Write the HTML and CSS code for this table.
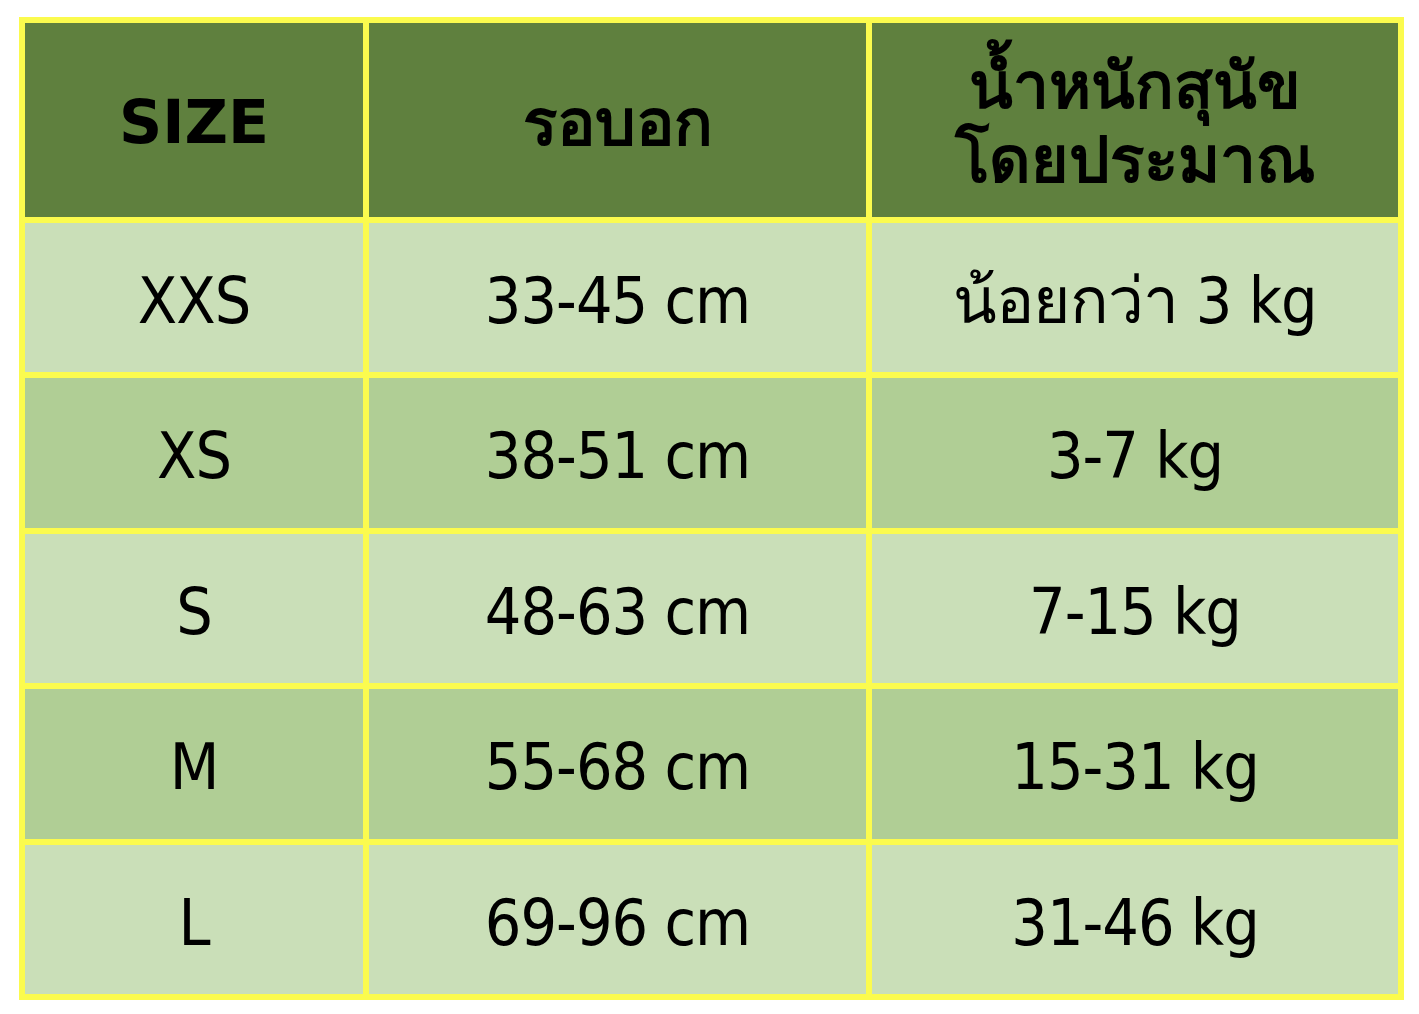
FILE: index.html
```html
<!DOCTYPE html>
<html lang="th">
<head>
<meta charset="utf-8">
<title>Size chart</title>
<link rel="stylesheet" href="styles.css">
</head>
<body>
<div class="chart">
  <div class="cell head"><span class="hl">SIZE</span></div>
  <div class="cell head"><span class="ht">รอบอก</span></div>
  <div class="cell head"><span class="ht two">น้ำหนักสุนัข<br>โดยประมาณ</span></div>

  <div class="cell light"><span class="t">XXS</span></div>
  <div class="cell light"><span class="t">33-45 cm</span></div>
  <div class="cell light"><span class="t">น้อยกว่า 3 kg</span></div>

  <div class="cell dark"><span class="t">XS</span></div>
  <div class="cell dark"><span class="t">38-51 cm</span></div>
  <div class="cell dark"><span class="t">3-7 kg</span></div>

  <div class="cell light"><span class="t">S</span></div>
  <div class="cell light"><span class="t">48-63 cm</span></div>
  <div class="cell light"><span class="t">7-15 kg</span></div>

  <div class="cell dark"><span class="t">M</span></div>
  <div class="cell dark"><span class="t">55-68 cm</span></div>
  <div class="cell dark"><span class="t">15-31 kg</span></div>

  <div class="cell light"><span class="t">L</span></div>
  <div class="cell light"><span class="t">69-96 cm</span></div>
  <div class="cell light"><span class="t">31-46 kg</span></div>
</div>
</body>
</html>
```
FILE: styles.css
```css
html, body {
  margin: 0;
  padding: 0;
  background: #ffffff;
}
body {
  font-family: "DejaVu Sans Condensed", "DejaVu Sans", "Noto Sans", sans-serif;
  color: #000;
}
.chart {
  margin: 17px 0 0 19px;
  width: 1385px;
  box-sizing: border-box;
  padding: 6px;
  background: #fbfb4e;
  display: grid;
  grid-template-columns: 338px 497px 526px;
  grid-template-rows: 194px 149px 150px 149px 150px 149px;
  gap: 6px;
}
.cell {
  display: flex;
  align-items: center;
  justify-content: center;
  text-align: center;
  line-height: 1;
}
.t {
  font-size: 64px;
  letter-spacing: -1px;
  padding-top: 6px;
}
.head {
  background: #5f803e;
  font-weight: bold;
}
.head .hl {
  font-family: "DejaVu Sans", sans-serif;
  font-size: 60px;
  padding-top: 4px;
}
.head .ht {
  font-size: 64px;
  line-height: 74px;
  padding-top: 6px;
}
.light { background: #cadfb8; }
.dark { background: #b0ce95; }
```
